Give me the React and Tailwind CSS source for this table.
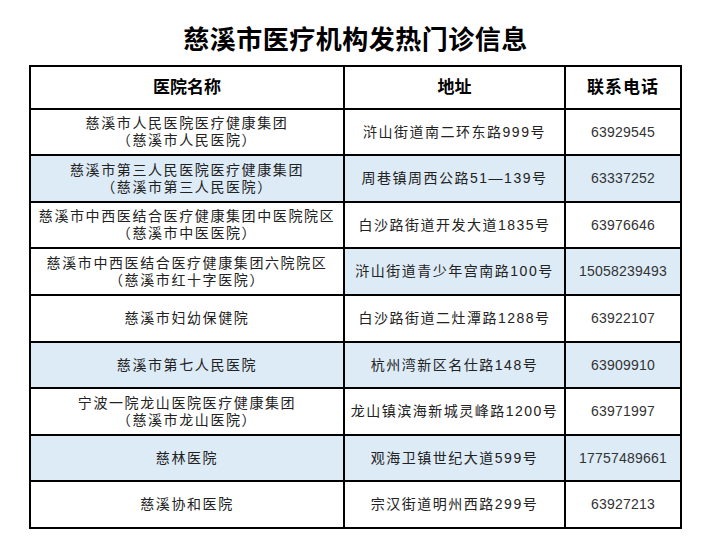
import React from 'react';

const rows = [
  { name: ['慈溪市人民医院医疗健康集团', '（慈溪市人民医院）'], addr: '浒山街道南二环东路999号', tel: '63929545', blue: [false, false, false] },
  { name: ['慈溪市第三人民医院医疗健康集团', '（慈溪市第三人民医院）'], addr: '周巷镇周西公路51—139号', tel: '63337252', blue: [true, true, true] },
  { name: ['慈溪市中西医结合医疗健康集团中医院院区', '（慈溪市中医医院）'], addr: '白沙路街道开发大道1835号', tel: '63976646', blue: [false, false, false] },
  { name: ['慈溪市中西医结合医疗健康集团六院院区', '（慈溪市红十字医院）'], addr: '浒山街道青少年宫南路100号', tel: '15058239493', blue: [false, true, true] },
  { name: ['慈溪市妇幼保健院'], addr: '白沙路街道二灶潭路1288号', tel: '63922107', blue: [false, false, false] },
  { name: ['慈溪市第七人民医院'], addr: '杭州湾新区名仕路148号', tel: '63909910', blue: [true, true, true] },
  { name: ['宁波一院龙山医院医疗健康集团', '（慈溪市龙山医院）'], addr: '龙山镇滨海新城灵峰路1200号', tel: '63971997', blue: [false, false, false] },
  { name: ['慈林医院'], addr: '观海卫镇世纪大道599号', tel: '17757489661', blue: [true, true, true] },
  { name: ['慈溪协和医院'], addr: '宗汉街道明州西路299号', tel: '63927213', blue: [false, false, false] },
];

const font = { fontFamily: '"Liberation Sans", "Noto Sans CJK SC", sans-serif' };

const Cell = ({ blue, children, className = '' }) => (
  <div className={`flex flex-col items-center justify-center text-center ${blue ? 'bg-[#ddebf7]' : 'bg-white'} ${className}`}>
    {children}
  </div>
);

export default function App() {
  return (
    <div className="w-[711px] h-[545px] bg-white" style={font}>
      <h1 className="pt-[25px] mb-[10px] text-center text-[26px] leading-[30px] font-bold tracking-[0.5px] text-black">
        慈溪市医疗机构发热门诊信息
      </h1>

      <div className="mx-auto w-[653px] grid grid-cols-[312px_219px_114px] grid-rows-[41px_44px_45px_44px_45px_45px_44px_45px_44px_45px] gap-[2px] p-[2px] bg-black">
        <Cell className="text-[17px] font-bold text-black">医院名称</Cell>
        <Cell className="text-[17px] font-bold text-black">地址</Cell>
        <Cell className="text-[17px] font-bold text-black tracking-[1px]">联系电话</Cell>

        {rows.map((r, i) => (
          <React.Fragment key={i}>
            <Cell blue={r.blue[0]} className="text-[14px] leading-[17px] tracking-[1.6px] text-[#222]">
              {r.name.map((line, j) => (
                <span key={j}>{line}</span>
              ))}
            </Cell>
            <Cell blue={r.blue[1]} className="text-[14px] leading-[17px] tracking-[1.5px] text-[#222]">
              {r.addr}
            </Cell>
            <Cell blue={r.blue[2]} className="text-[14px] leading-[17px] tracking-[0.2px] text-[#333]">
              {r.tel}
            </Cell>
          </React.Fragment>
        ))}
      </div>
    </div>
  );
}
